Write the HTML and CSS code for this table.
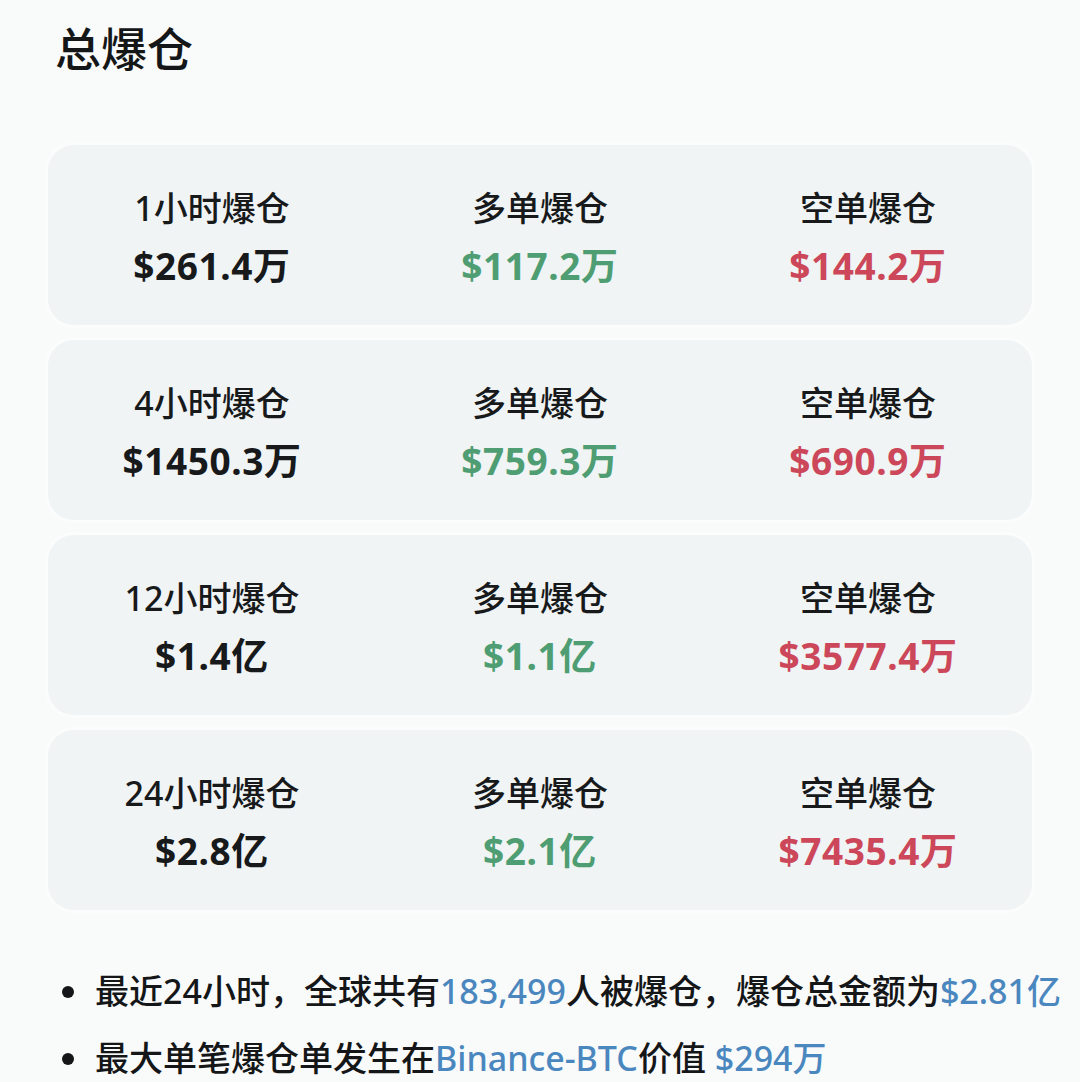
FILE: index.html
```html
<!DOCTYPE html>
<html lang="zh-CN">
<head>
<meta charset="utf-8">
<link rel="stylesheet" href="styles.css">
</head>
<body>
<div class="page">
  <h1 class="title">总爆仓</h1>
  <div class="cards">
    <div class="card">
      <div class="cell"><div class="label">1小时爆仓</div><div class="value">$261.4万</div></div>
      <div class="cell"><div class="label">多单爆仓</div><div class="value green">$117.2万</div></div>
      <div class="cell"><div class="label">空单爆仓</div><div class="value red">$144.2万</div></div>
    </div>
    <div class="card">
      <div class="cell"><div class="label">4小时爆仓</div><div class="value">$1450.3万</div></div>
      <div class="cell"><div class="label">多单爆仓</div><div class="value green">$759.3万</div></div>
      <div class="cell"><div class="label">空单爆仓</div><div class="value red">$690.9万</div></div>
    </div>
    <div class="card">
      <div class="cell"><div class="label">12小时爆仓</div><div class="value">$1.4亿</div></div>
      <div class="cell"><div class="label">多单爆仓</div><div class="value green">$1.1亿</div></div>
      <div class="cell"><div class="label">空单爆仓</div><div class="value red">$3577.4万</div></div>
    </div>
    <div class="card">
      <div class="cell"><div class="label">24小时爆仓</div><div class="value">$2.8亿</div></div>
      <div class="cell"><div class="label">多单爆仓</div><div class="value green">$2.1亿</div></div>
      <div class="cell"><div class="label">空单爆仓</div><div class="value red">$7435.4万</div></div>
    </div>
  </div>
  <ul class="notes">
    <li>最近24小时，全球共有<span class="blue">183,499</span>人被爆仓，爆仓总金额为<span class="blue">$2.81亿</span></li>
    <li>最大单笔爆仓单发生在<span class="blue">Binance-BTC</span>价值 <span class="blue">$294万</span></li>
  </ul>
</div>
</body>
</html>
```

FILE: styles.css
```css
html, body {
  margin: 0;
  padding: 0;
  background: #f9fafa;
}
body {
  font-family: "Noto Sans", "Noto Sans CJK SC", sans-serif;
  color: #1a1c1e;
  width: 1080px;
  height: 1082px;
  overflow: hidden;
}
.page {
  padding: 0 48px 0 48px;
}
.title {
  margin: 0;
  padding: 20px 0 0 7px;
  font-size: 46px;
  line-height: 56px;
  font-weight: 500;
  height: 145px;
  box-sizing: border-box;
  color: #141618;
}
.cards {
  display: flex;
  flex-direction: column;
  gap: 15px;
}
.card {
  background: #f0f4f5;
  border-radius: 26px;
  height: 180px;
  display: grid;
  grid-template-columns: 1fr 1fr 1fr;
  box-shadow: 0 0 0 3px #fbfcfc;
}
.cell {
  display: flex;
  flex-direction: column;
  align-items: center;
  padding-top: 42px;
}
.label {
  font-size: 34px;
  line-height: 42px;
  font-weight: 500;
  color: #17191b;
}
.value {
  margin-top: 14px;
  font-size: 37px;
  line-height: 46px;
  font-weight: 700;
  color: #17191b;
  letter-spacing: 0.6px;
}
.green { color: #4f9d72; }
.red { color: #cc4759; }
.blue { color: #4a87bf; }
.notes {
  list-style: none;
  margin: 0;
  padding: 48px 0 0 0;
}
.notes li {
  position: relative;
  padding-left: 47px;
  font-size: 34px;
  line-height: 67px;
  color: #141618;
  white-space: nowrap;
  font-weight: 500;
}
.notes li::before {
  content: "";
  position: absolute;
  left: 14px;
  top: 28px;
  width: 12px;
  height: 12px;
  border-radius: 50%;
  background: #141618;
}
```
